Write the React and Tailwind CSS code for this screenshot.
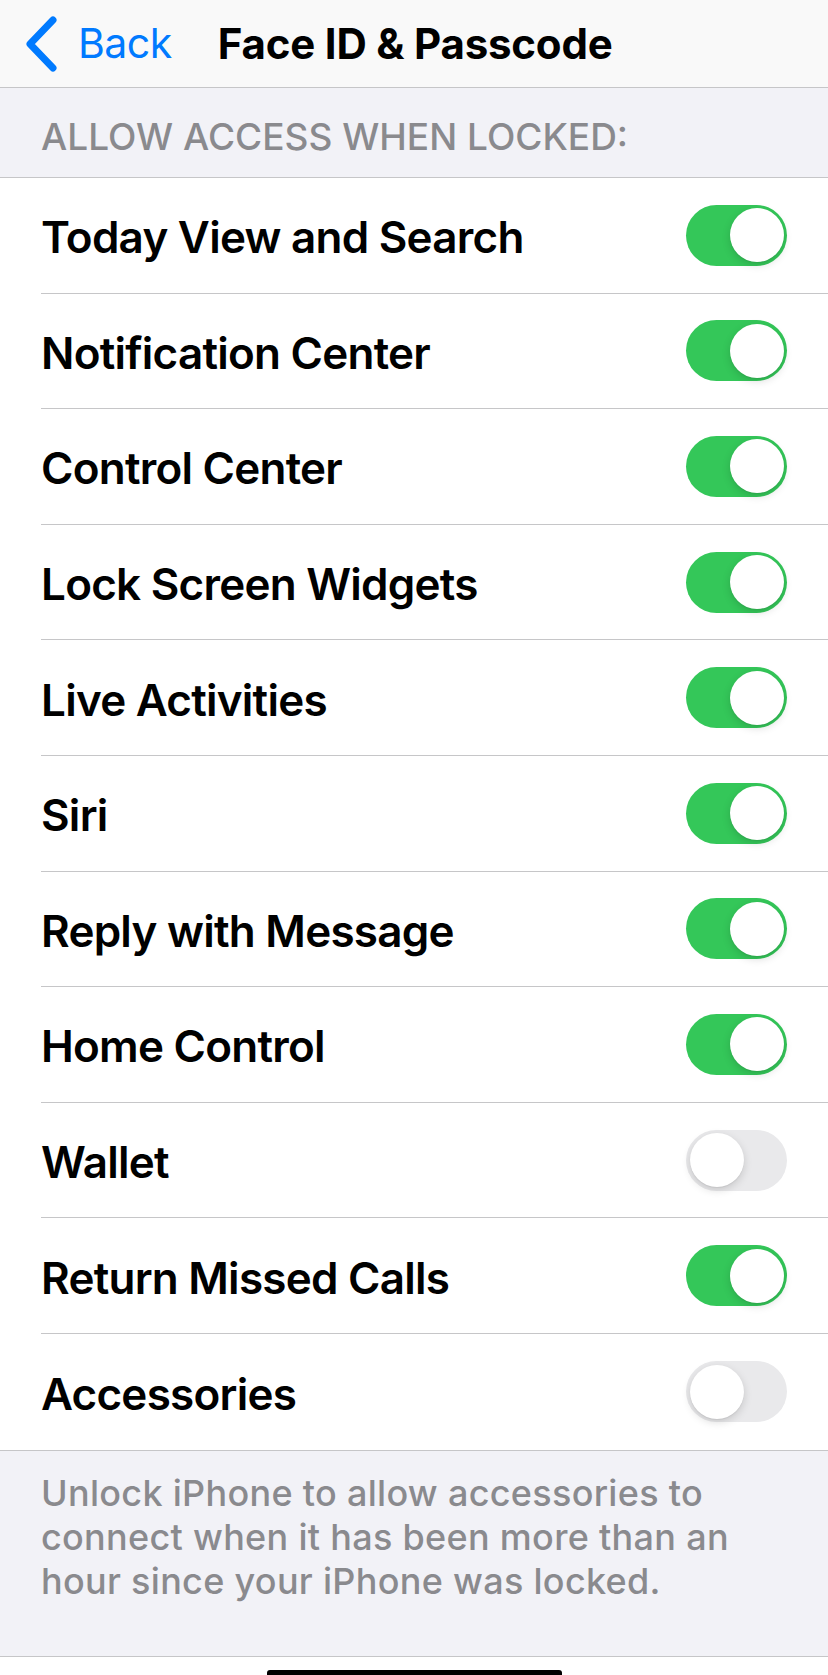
import React from 'react';

const rows = [
  { label: 'Today View and Search', on: true },
  { label: 'Notification Center', on: true },
  { label: 'Control Center', on: true },
  { label: 'Lock Screen Widgets', on: true },
  { label: 'Live Activities', on: true },
  { label: 'Siri', on: true },
  { label: 'Reply with Message', on: true },
  { label: 'Home Control', on: true },
  { label: 'Wallet', on: false },
  { label: 'Return Missed Calls', on: true },
  { label: 'Accessories', on: false },
];

const Toggle = ({ on }) => (
  <div
    className={
      on
        ? 'flex h-[61px] w-[101px] shrink-0 items-center justify-end rounded-full bg-[#34c759] px-[3.5px]'
        : 'flex h-[61px] w-[101px] shrink-0 items-center justify-start rounded-full bg-[#e9e9eb] px-[3.5px]'
    }
  >
    <div className="h-[54px] w-[54px] rounded-full bg-white shadow-[0_3px_8px_rgba(0,0,0,0.15),0_1px_1px_rgba(0,0,0,0.06)]" />
  </div>
);

export default function App() {
  return (
    <div
      className="flex min-h-[1675px] w-[828px] flex-col bg-white"
      style={{ fontFamily: 'Inter, "Noto Sans", sans-serif' }}
    >
      {/* nav bar */}
      <div className="flex h-[88px] shrink-0 items-center border-b border-[#c6c6c8] bg-[#f9f9f9]">
        <svg width="36" height="56" viewBox="0 0 36 56" className="ml-[22px]" fill="none">
          <polyline
            points="31,4 8,28 31,52"
            stroke="#007aff"
            strokeWidth="7"
            strokeLinecap="round"
            strokeLinejoin="round"
          />
        </svg>
        <span className="ml-[20px] text-[41px] leading-none tracking-[-0.5px] text-[#007aff]">Back</span>
        <span className="ml-[46px] text-[42px] font-bold leading-none tracking-[-0.2px] text-black">
          Face ID &amp; Passcode
        </span>
      </div>

      {/* section header */}
      <div className="flex h-[90px] shrink-0 items-center border-b border-[#c6c6c8] bg-[#f2f2f7] pl-[41px] pt-[8px]">
        <span className="text-[37px] font-medium leading-none tracking-[0px] text-[#8a8a8e]">
          ALLOW ACCESS WHEN LOCKED:
        </span>
      </div>

      {/* rows */}
      <div className="flex flex-col">
        {rows.map((r, i) => (
          <div key={r.label} className="flex h-[115.6px] pl-[41px]">
            <div
              className={
                i < rows.length - 1
                  ? 'flex flex-1 items-center justify-between border-b border-[#c6c6c8] pr-[41px]'
                  : 'flex flex-1 items-center justify-between pr-[41px]'
              }
            >
              <span className="pt-[4px] text-[44px] font-semibold leading-none tracking-[-0.75px] text-black">
                {r.label}
              </span>
              <Toggle on={r.on} />
            </div>
          </div>
        ))}
      </div>

      {/* footer */}
      <div className="h-[207px] shrink-0 border-y border-[#c6c6c8] bg-[#f2f2f7] pl-[41px] pt-[20px]">
        <p className="text-[36px] font-medium leading-[44px] tracking-[0.3px] text-[#8a8a8e]">
          Unlock iPhone to allow accessories to
          <br />
          connect when it has been more than an
          <br />
          hour since your iPhone was locked.
        </p>
      </div>

      <div className="flex flex-1 items-end justify-center">
        <div className="h-[5px] w-[295px] rounded-t-[3px] bg-black" />
      </div>
    </div>
  );
}
